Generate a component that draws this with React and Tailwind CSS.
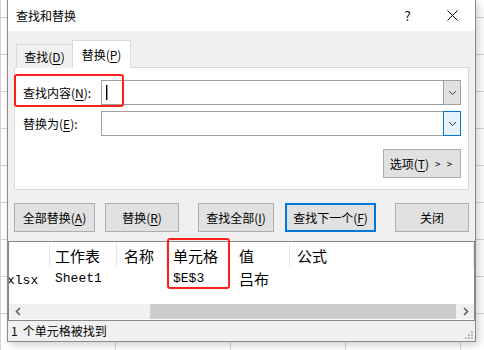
import React from "react";

const U = ({ children }) => <span className="underline underline-offset-[2px]">{children}</span>;

function Chevron() {
  return (
    <svg width="9" height="6" viewBox="0 0 9 6">
      <path d="M1 1 L4.5 4.5 L8 1" fill="none" stroke="#404040" strokeWidth="1" />
    </svg>
  );
}

function Btn({ w, children, primary }) {
  return (
    <div
      className={`${w} h-[29px] flex items-center justify-center text-[12px] leading-none text-black bg-[#e1e1e1] ${
        primary ? "border-2 border-[#0078d7]" : "border border-[#adadad]"
      }`}
    >
      {children}
    </div>
  );
}

export default function App() {
  return (
    <div className="relative w-[484px] h-[350px] overflow-hidden bg-white [background-image:linear-gradient(to_right,#d4d4d4_1px,transparent_1px),linear-gradient(to_bottom,#d4d4d4_1px,transparent_1px)] [background-size:115px_37px] [background-position:0_17px] font-['Noto_Sans_CJK_SC','Microsoft_YaHei',sans-serif]">
      <div className="absolute left-[7px] top-0 w-[469px] h-[342px] bg-[#f0f0f0] border-x border-b border-[#8a8a8a] flex flex-col shadow-[3px_3px_8px_rgba(0,0,0,0.18)]">
        {/* title bar */}
        <div className="h-[31px] bg-white flex items-center pl-[8px] shrink-0">
          <span className="text-[12px] leading-none text-black">查找和替换</span>
          <div className="ml-auto flex h-full">
            <div className="w-[45px] h-full flex items-center justify-center text-[13px] text-black leading-none">?</div>
            <div className="w-[45px] h-full flex items-center justify-center">
              <svg width="11" height="11" viewBox="0 0 11 11">
                <path d="M0.5 0.5 L10.5 10.5 M10.5 0.5 L0.5 10.5" stroke="#000" strokeWidth="1" />
              </svg>
            </div>
          </div>
        </div>

        {/* body */}
        <div className="flex flex-col px-[6px] shrink-0">
          {/* tabs */}
          <div className="mt-[9px] flex items-end pl-[2px] h-[28px] -mb-px relative z-10">
            <div className="w-[56px] h-[24px] border-t border-l border-[#d9d9d9] bg-[#f0f0f0] flex items-center justify-center text-[12px] leading-none text-black pt-[1px]">
              查找(<U>D</U>)
            </div>
            <div className="w-[59px] h-[28px] border-t border-x border-[#d9d9d9] bg-white flex items-center justify-center text-[12px] leading-none text-black pt-[1px]">
              替换(<U>P</U>)
            </div>
          </div>
          {/* panel */}
          <div className="h-[123px] border border-[#d9d9d9] bg-white flex flex-col pt-[12px] pl-[8px] pr-[7px]">
            <div className="flex items-center h-[25px]">
              <div className="w-[78px] text-[12px] leading-none text-black">
                查找内容(<U>N</U>):
              </div>
              <div className="flex-1 h-full border border-[#a0a0a0] flex">
                <div className="flex-1 flex items-center pl-[4px]">
                  <div className="w-[2px] h-[15px] border-l border-black bg-[#9a9a9a]" />
                </div>
                <div className="w-[17px] h-full bg-[#e1e1e1] border-l border-[#a0a0a0] flex items-center justify-center">
                  <Chevron />
                </div>
              </div>
            </div>
            <div className="flex items-center h-[25px] mt-[6px]">
              <div className="w-[78px] text-[12px] leading-none text-black">
                替换为(<U>E</U>):
              </div>
              <div className="flex-1 h-full border border-[#a0a0a0] flex">
                <div className="flex-1" />
                <div className="w-[18px] -my-px -mr-px border border-[#0078d7] bg-[#e5f1fb] flex items-center justify-center">
                  <Chevron />
                </div>
              </div>
            </div>
            <div className="flex justify-end mt-[13px]">
              <div className="w-[78px] h-[29px] bg-[#e1e1e1] border border-[#adadad] flex items-center justify-center text-[12px] leading-none text-black gap-[6px]">
                <span>
                  选项(<U>T</U>)
                </span>
                <span className="text-[10px] tracking-[2px]">&gt; &gt;</span>
              </div>
            </div>
          </div>

          {/* buttons */}
          <div className="mt-[13px] flex">
            <Btn w="w-[81px]">
              全部替换(<U>A</U>)
            </Btn>
            <div className="w-[10px]" />
            <Btn w="w-[74px]">
              替换(<U>R</U>)
            </Btn>
            <div className="w-[19px]" />
            <Btn w="w-[76px]">
              查找全部(<U>I</U>)
            </Btn>
            <div className="w-[11px]" />
            <Btn w="w-[91px]" primary>
              查找下一个(<U>F</U>)
            </Btn>
            <div className="w-[19px]" />
            <Btn w="w-[74px]">关闭</Btn>
          </div>

          {/* results list */}
          <div className="mt-[9px] -mx-[6px] h-[80px] border border-[#828790] bg-white flex flex-col">
            <div className="h-[26px] flex text-[15px] leading-none text-black">
              <div className="w-[41px] h-full flex items-center py-[1px]">
                <div className="h-full w-full border-r border-[#e5e5e5]" />
              </div>
              <HeadCell w="w-[67px]" pl="pl-[5px]">工作表</HeadCell>
              <HeadCell w="w-[50px]" pl="pl-[7px]">名称</HeadCell>
              <HeadCell w="w-[63px]" pl="pl-[6px]">单元格</HeadCell>
              <HeadCell w="w-[60px]" pl="pl-[9px]">值</HeadCell>
              <HeadCell w="w-[184px]" pl="pl-[7px]">公式</HeadCell>
            </div>
            <div className="h-[20px] flex items-center text-black leading-none">
              <div className="w-[41px] overflow-hidden whitespace-nowrap">
                <span className="inline-block -ml-[2px] font-['Liberation_Mono',monospace] text-[13px]">xlsx</span>
              </div>
              <div className="w-[67px] pl-[5px] font-['Liberation_Mono',monospace] text-[13px]">Sheet1</div>
              <div className="w-[50px]" />
              <div className="w-[63px] pl-[6px] font-['Liberation_Mono',monospace] text-[13px]">$E$3</div>
              <div className="w-[60px] pl-[9px] text-[15px]">吕布</div>
            </div>
            <div className="flex-1" />
            <div className="h-[15px] flex bg-[#f0f0f0] mb-[1px]">
              <div className="w-[17px] h-full flex items-center justify-center">
                <svg width="6" height="9" viewBox="0 0 6 9">
                  <path d="M5 1 L1.5 4.5 L5 8" fill="none" stroke="#606060" strokeWidth="1.6" />
                </svg>
              </div>
              <div className="flex-1 h-full flex">
                <div className="ml-[124px] w-[306px] h-full bg-[#cdcdcd]" />
              </div>
              <div className="w-[17px] h-full flex items-center justify-center">
                <svg width="6" height="9" viewBox="0 0 6 9">
                  <path d="M1 1 L4.5 4.5 L1 8" fill="none" stroke="#606060" strokeWidth="1.6" />
                </svg>
              </div>
            </div>
          </div>
        </div>

        {/* status bar */}
        <div className="h-[20px] flex items-center pl-[3px] relative">
          <span className="text-[12px] leading-none text-black">1</span>
          <span className="ml-[5px] text-[12px] leading-none text-black">个单元格被找到</span>
          <svg className="absolute right-[2px] bottom-[2px]" width="8" height="8" viewBox="0 0 8 8">
            <rect x="6" y="0" width="2" height="2" fill="#b8b8b8" />
            <rect x="3" y="3" width="2" height="2" fill="#b8b8b8" />
            <rect x="6" y="3" width="2" height="2" fill="#b8b8b8" />
            <rect x="0" y="6" width="2" height="2" fill="#b8b8b8" />
            <rect x="3" y="6" width="2" height="2" fill="#b8b8b8" />
            <rect x="6" y="6" width="2" height="2" fill="#b8b8b8" />
          </svg>
        </div>

        {/* red highlight boxes */}
        <div className="absolute left-[6px] top-[74px] w-[110px] h-[33px] border-2 border-[#ff1f1f] rounded-[3px] pointer-events-none" />
        <div className="absolute left-[159px] top-[238px] w-[63px] h-[51px] border-2 border-[#ff1f1f] rounded-[3px] pointer-events-none" />
      </div>
    </div>
  );
}

function HeadCell({ w, pl, children }) {
  return (
    <div className={`${w} h-full py-[1px]`}>
      <div className={`h-full ${pl} flex items-center border-r border-[#e5e5e5]`}>{children}</div>
    </div>
  );
}
